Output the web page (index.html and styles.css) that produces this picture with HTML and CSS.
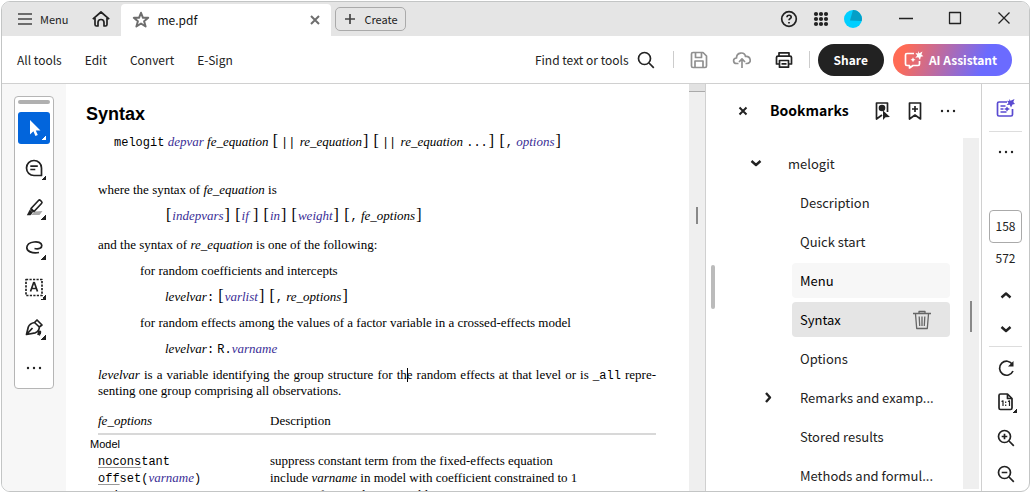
FILE: index.html
```html
<!DOCTYPE html>
<html lang="en">
<head>
<meta charset="utf-8">
<title>me.pdf</title>
<link rel="stylesheet" href="styles.css">
</head>
<body>
<div class="window">
  <header class="tabbar">
    <button class="menu-btn"><svg class="ico" width="16" height="16" viewBox="0 0 16 16"><path d="M1 3h14M1 8h14M1 13h14"/></svg>Menu</button>
    <button class="home-btn" aria-label="Home"><svg class="ico" width="20" height="18" viewBox="0 0 20 18"><path d="M1.800 9.200 10 2l8.200 7.200M4 8v6.500q0 1.500 1.500 1.500H7v-3.500a3 3 0 0 1 6 0V16h1.500q1.500 0 1.500-1.500V8"/></svg></button>
    <div class="tab">
      <svg class="ico star" width="18" height="18" viewBox="0 0 18 18"><path d="m9 1.800 2 5h5.200l-4.100 3.400 1.500 5.300L9 12.500l-4.600 3 1.500-5.300-4.100-3.400H7z"/></svg>
      <span class="tab-name">me.pdf</span>
      <button class="tab-close" aria-label="Close tab"><svg class="ico" width="10" height="10" viewBox="0 0 10 10"><path d="m1 1 8 8m0-8-8 8"/></svg></button>
    </div>
    <button class="create-btn"><svg class="ico" width="12" height="12" viewBox="0 0 12 12"><path d="M6 1v10M1 6h10"/></svg>Create</button>
    <div class="system">
      <button aria-label="Help"><svg class="ico" width="18" height="18" viewBox="0 0 18 18"><circle cx="9" cy="9" r="7.300"/><path d="M7 7.200c0-2.600 4.200-2.600 4.200 0C11.200 8.600 9 8.400 9 10.300M9 12v1.500"/></svg></button>
      <button aria-label="Apps"><svg class="solid" width="16" height="16" viewBox="0 0 16 16"><circle cx="3" cy="3" r="2.100"/><circle cx="8" cy="3" r="2.100"/><circle cx="13" cy="3" r="2.100"/><circle cx="3" cy="8" r="2.100"/><circle cx="8" cy="8" r="2.100"/><circle cx="13" cy="8" r="2.100"/><circle cx="3" cy="13" r="2.100"/><circle cx="8" cy="13" r="2.100"/><circle cx="13" cy="13" r="2.100"/></svg></button>
      <button aria-label="Account"><svg width="18" height="18" viewBox="0 0 18 18"><circle cx="9" cy="9" r="9" fill="#00cfff"/><path d="M9 0a9 9 0 0 1 8.700 11L6 10.500z" fill="#049fc7"/></svg></button>
    </div>
    <div class="win-controls">
      <button aria-label="Minimize"><svg class="ico thin" width="14" height="14" viewBox="0 0 14 14"><path d="M0 7.500h14"/></svg></button>
      <button aria-label="Maximize"><svg class="ico thin" width="14" height="14" viewBox="0 0 14 14"><path d="M1.500 1.500h11v11h-11z"/></svg></button>
      <button aria-label="Close"><svg class="ico thin" width="14" height="14" viewBox="0 0 14 14"><path d="m1.500 1.500 11 11m0-11-11 11"/></svg></button>
    </div>
  </header>

  <div class="toolbar">
    <nav class="tools">
      <button>All tools</button><button>Edit</button><button>Convert</button><button>E-Sign</button>
    </nav>
    <div class="actions">
      <button class="find">Find text or tools<svg class="ico" width="18" height="18" viewBox="0 0 18 18"><circle cx="7.500" cy="7.500" r="6"/><path d="m12 12 4.800 4.800"/></svg></button>
      <span class="sep"></span>
      <button class="save" aria-label="Save"><svg class="ico muted" width="18" height="18" viewBox="0 0 18 18"><path d="M3 1.500h10L16.500 5v10q0 1.500-1.500 1.500H3q-1.500 0-1.500-1.500V3Q1.500 1.500 3 1.500zM5.500 2v4.500h6V2M5 16v-6h8v6"/></svg></button>
      <button class="upload" aria-label="Upload"><svg class="ico muted" width="20" height="18" viewBox="0 0 20 18"><path d="M6.500 12.500H4.700C.5 12.300.7 7 4.500 7 4.500 1 12.500.300 13.500 5.500c5.500-.5 6.500 7 1.500 7h-1.500M10 17V8m-3 3 3-3.200L13 11"/></svg></button>
      <button class="print" aria-label="Print"><svg class="ico" width="18" height="18" viewBox="0 0 18 18"><path d="M4 5V1.800h10V5M4 13H1.500V6.500Q1.500 5.200 3 5.200h12q1.500 0 1.500 1.300V13H14M4.500 9.500h9v6.700h-9zM6.500 12.800h5"/></svg></button>
      <span class="sep"></span>
      <button class="share">Share</button>
      <button class="assistant"><svg class="ico" width="20" height="20" viewBox="0 0 20 20"><path d="M10 3.500H3q-1.500 0-1.500 1.500v9Q1.500 15.500 3 15.500h2.500V18l3.500-2.500h5q1.500 0 1.500-1.500v-3"/><path class="fill" d="m14 1 1.400 2.200 3.100-1.700-1.100 3 2 1.700-2.600.6L16 10l-1.700-2.700-3 .4 1.900-2.300-1.700-2.400 2.700.5zM9 7.300l.8 1.700 1.700.8-1.700.8L9 12.300l-.8-1.700-1.700-.8L8.200 9z"/></svg>AI Assistant</button>
    </div>
  </div>

  <div class="workspace">
    <aside class="left-rail">
      <div class="toolbox">
        <span class="grip"></span>
        <button class="tool active" aria-label="Select"><svg class="solid" width="24" height="24" viewBox="0 0 24 24"><path d="M8 4v14.500l3.400-3.200 2 4.700 2.400-1-2-4.500h4.700z"/></svg></button>
        <button class="tool" aria-label="Comment"><svg class="ico" width="24" height="24" viewBox="0 0 24 24"><path d="M19.500 19.500H12a7.500 7.500 0 1 1 7.500-7.500zM8.300 10.200h7.500M8.300 13.500h5"/></svg></button>
        <button class="tool" aria-label="Highlight"><svg class="ico" width="24" height="24" viewBox="0 0 24 24"><path class="shade" d="m13 15.500 7.500-.5-3 4H9z"/><path d="m9 12.500 7.500-8q1-1 2 0l1 1q1 1 0 2l-7.500 8zM8.500 13l3 3"/><path class="fill" d="m7.800 13.500 3 3-2.300 2.700H4.800z"/></svg></button>
        <button class="tool" aria-label="Draw"><svg class="ico" width="24" height="24" viewBox="0 0 24 24"><path d="M12.500 12.500c4.500 1 7.500-.5 7.300-3.200C19.500 6.300 15.500 5.500 12 6c-4 .500-7 2.500-7.200 5.500C4.600 15 10 18 17 16.500"/></svg></button>
        <button class="tool" aria-label="Select text"><svg class="ico" width="24" height="24" viewBox="0 0 24 24"><path stroke-dasharray="2.200 1.300" d="M4 3.500h16v16H4z"/><path d="m8.500 15.500 3.200-9h.6l3.200 9M9.700 12.500h4.600"/></svg></button>
        <button class="tool" aria-label="Sign"><svg class="ico" width="24" height="24" viewBox="0 0 24 24"><path d="m4.500 18.500 1.800-7.500c1-2.500 3.500-4 6.200-4.500l4.800 4.500c0 3-2 5-4 5.800zM5 18l5.500-6M12.500 6.500 15 4l5 5-2.700 2M16 19c.5-2.500 1.500-4 2.300-3.500.8.500-1 3.500-.2 3.500"/></svg></button>
        <button class="more" aria-label="More tools"><svg class="solid" width="16" height="4" viewBox="0 0 16 4"><circle cx="2" cy="2" r="1.200"/><circle cx="8" cy="2" r="1.200"/><circle cx="14" cy="2" r="1.200"/></svg></button>
      </div>
    </aside>

    <main class="document">
      <h1>Syntax</h1>
      <p class="cmd"><code>melogit</code> <a href="#">depvar</a> <i>fe<u>_</u>equation</i> <b>[</b><code class="pipes">||</code> <i>re<u>_</u>equation</i><b>]</b> <b>[</b><code class="pipes">||</code> <i>re<u>_</u>equation</i> <code>...</code><b>]</b> <b>[</b><code>,</code> <a href="#">options</a><b>]</b></p>
      <p class="where">where the syntax of <i>fe<u>_</u>equation</i> is</p>
      <p class="deep"><b>[</b><a href="#">indepvars</a><b>]</b> <b>[</b><a href="#">if</a> <b>]</b> <b>[</b><a href="#">in</a><b>]</b> <b>[</b><a href="#">weight</a><b>]</b> <b>[</b><code>,</code> <i>fe<u>_</u>options</i><b>]</b></p>
      <p class="after">and the syntax of <i>re<u>_</u>equation</i> is one of the following:</p>
      <p class="mid">for random coefficients and intercepts</p>
      <p class="deep"><i>levelvar</i><code>:</code> <b>[</b><a href="#">varlist</a><b>]</b> <b>[</b><code>,</code> <i>re<u>_</u>options</i><b>]</b></p>
      <p class="mid">for random effects among the values of a factor variable in a crossed-effects model</p>
      <p class="deep"><i>levelvar</i><code>:</code> <code>R.</code><a href="#">varname</a></p>
      <p class="para"><i>levelvar</i> is a variable identifying the group structure for th<span class="caret"></span>e random effects at that level or is <u>_</u><code>all</code> repre&shy;senting one group comprising all observations.</p>
      <table class="options">
        <thead><tr><th scope="col"><i>fe<u>_</u>options</i></th><th scope="col">Description</th></tr></thead>
        <tbody>
          <tr class="group"><td colspan="2">Model</td></tr>
          <tr><td><code><span class="abbr">nocons</span>tant</code></td><td>suppress constant term from the fixed-effects equation</td></tr>
          <tr><td><code><span class="abbr">off</span>set(<a href="#">varname</a>)</code></td><td>include <i>varname</i> in model with coefficient constrained to 1</td></tr>
          <tr><td><code>asis</code></td><td>retain perfect predictor variables</td></tr>
        </tbody>
      </table>
    </main>

    <div class="doc-scroll"><span class="scroll-head"></span><span class="scroll-thumb"></span></div>

    <section class="bookmarks">
      <span class="splitter"></span>
      <div class="bm-head">
        <button class="bm-close" aria-label="Close panel"><svg class="ico" width="10" height="10" viewBox="0 0 10 10"><path d="m1.500 1.500 7 7m0-7-7 7"/></svg></button>
        <h2>Bookmarks</h2>
        <button class="bm-find" aria-label="Find current bookmark"><svg class="ico" width="16" height="20" viewBox="0 0 16 20"><path d="m8 14-5.500 4V2h11v9"/><circle class="fill" cx="8" cy="7" r="3.300"/><path class="fill" d="M9 9.500v9.500l2.500-2.800 4.500-.2z"/></svg></button>
        <button class="bm-add" aria-label="Add bookmark"><svg class="ico" width="14" height="20" viewBox="0 0 14 20"><path d="M1.500 2h11v16L7 14l-5.500 4zM7 5v6M4 8h6"/></svg></button>
        <button class="bm-more" aria-label="Options"><svg class="solid" width="16" height="4" viewBox="0 0 16 4"><circle cx="2" cy="2" r="1.200"/><circle cx="8" cy="2" r="1.200"/><circle cx="14" cy="2" r="1.200"/></svg></button>
      </div>
      <div class="bm-body">
        <ul class="tree">
          <li class="root"><button class="toggle" aria-label="Collapse"><svg class="ico bold" width="12" height="12" viewBox="0 0 12 12"><path d="m1.500 3 4.500 4 4.500-4"/></svg></button><button class="item">melogit</button></li>
          <li><span class="toggle"></span><button class="item">Description</button></li>
          <li><span class="toggle"></span><button class="item">Quick start</button></li>
          <li><span class="toggle"></span><button class="item hover">Menu</button></li>
          <li><span class="toggle"></span><button class="item selected">Syntax<svg class="ico thin trash" width="18" height="20" viewBox="0 0 18 20"><path d="M0 3.500h18M6 3V1.500h6V3M2.500 4l1.200 14.500h10.600L15.500 4M6.200 6.500l.5 9.500M9 6.500V16m2.800-9.500-.5 9.500"/></svg></button></li>
          <li><span class="toggle"></span><button class="item">Options</button></li>
          <li><button class="toggle" aria-label="Expand"><svg class="ico bold" width="12" height="12" viewBox="0 0 12 12"><path d="m4 1 4 4.500L4 10"/></svg></button><button class="item">Remarks and examp...</button></li>
          <li><span class="toggle"></span><button class="item">Stored results</button></li>
          <li><span class="toggle"></span><button class="item">Methods and formul...</button></li>
        </ul>
        <div class="bm-scroll"><span></span></div>
      </div>
    </section>

    <aside class="right-rail">
      <button class="summary" aria-label="Generative summary"><svg class="ico violet" width="20" height="20" viewBox="0 0 20 20"><path d="M11 4H3Q1.500 4 1.500 5.500v11Q1.500 18 3 18h12q1.500 0 1.500-1.500V11M4.500 8h5M4.500 11h3M4.500 14h6"/><path class="fill" d="m13 1 1.600 1.700L18.500 1l-1.200 3 1.700 2-2.500.5L15 9.500l-1.300-2.700-3 .2 1.800-2-1.500-2.300 2.300.3zM11 8.500l1 1.500 2 1-2 1-1 1.500-1-1.500-2-1 2-1z"/></svg></button>
      <hr>
      <button class="rail-more" aria-label="More panels"><svg class="solid" width="16" height="4" viewBox="0 0 16 4"><circle cx="2" cy="2" r="1.200"/><circle cx="8" cy="2" r="1.200"/><circle cx="14" cy="2" r="1.200"/></svg></button>
      <input class="page" type="text" value="158" aria-label="Page number">
      <span class="total">572</span>
      <button class="up" aria-label="Previous page"><svg class="ico bold" width="12" height="12" viewBox="0 0 12 12"><path d="m1.500 8.500 4.500-4 4.500 4"/></svg></button>
      <button class="down" aria-label="Next page"><svg class="ico bold" width="12" height="12" viewBox="0 0 12 12"><path d="m1.500 4 4.500 4 4.500-4"/></svg></button>
      <hr>
      <button class="rotate" aria-label="Rotate"><svg class="ico" width="18" height="18" viewBox="0 0 18 18"><path d="M15.500 5.500A7 7 0 1 0 16 12"/><path class="fill" d="M16.500 2v5.500H11z"/></svg></button>
      <button class="fit" aria-label="Actual size"><svg class="ico" width="18" height="20" viewBox="0 0 18 20"><path d="M3.500 2h7L15 6.500V16q0 1.500-1.500 1.500h-10Q2 17.500 2 16V3.500Q2 2 3.500 2zM10.500 2v4.500H15"/><path class="fine" d="M4.500 9.500 6 8.800V14m5-4.500 1.500-.7V14M8.700 9.500V11m0 1.500V14"/></svg></button>
      <button class="zoom-in" aria-label="Zoom in"><svg class="ico" width="18" height="18" viewBox="0 0 18 18"><circle cx="7.500" cy="7.500" r="6"/><path d="m12 12 4.800 4.800M7.500 4.700v5.600M4.700 7.500h5.600"/></svg></button>
      <button class="zoom-out" aria-label="Zoom out"><svg class="ico" width="18" height="18" viewBox="0 0 18 18"><circle cx="7.500" cy="7.500" r="6"/><path d="m12 12 4.800 4.800M4.700 7.500h5.600"/></svg></button>
    </aside>
  </div>
</div>
</body>
</html>
```
FILE: styles.css
```css
* { box-sizing: border-box; }

body {
  margin: 0;
  padding: 1px;
  height: 100vh;
  background: #fff;
  color: #222;
  font: 12px/20px "Noto Sans CJK SC", "Open Sans", sans-serif;
}

button {
  display: flex;
  align-items: center;
  padding: 0;
  border: 0;
  background: none;
  color: inherit;
  font: inherit;
  white-space: nowrap;
}

svg { display: block; flex: none; }
.ico { fill: none; stroke: #222; stroke-width: 1.7; stroke-linejoin: round; }
.ico .fill { fill: #222; stroke: none; }
.ico .shade { fill: #aaa; stroke: none; }
.ico .fine { stroke-width: 1.2; }
.solid { fill: #222; }
.ico.thin { stroke-width: 1.3; }
.ico.bold { stroke-width: 2.4; }
.ico.muted { stroke: #909090; }
.ico.violet { stroke: #5a4bd1; }
.ico.violet .fill { fill: #5a4bd1; }

.window {
  display: flex;
  flex-direction: column;
  height: calc(100vh - 2px);
  border: 1px solid #c3c5c5;
  border-radius: 9px;
  overflow: hidden;
}

/* Tab bar */
.tabbar {
  display: flex;
  align-items: center;
  height: 34px;
  flex: none;
  background: #e5e5e5;
  font-size: 11px;
}
.menu-btn { gap: 7px; margin-left: 15px; }
.menu-btn .ico, .create-btn .ico { stroke: #444; }
.home-btn { margin-left: 23px; }
.tab {
  display: flex;
  align-items: center;
  align-self: flex-end;
  width: 210px;
  height: 32px;
  margin-left: 10px;
  padding: 0 11px;
  border-radius: 4px 4px 0 0;
  background: #fff;
  color: #111;
  font-size: 12px;
}
.ico.star { stroke: #6e6e6e; stroke-width: 2; }
.tab-name { flex: 1; margin-left: 7px; }
.tab-close .ico { stroke: #6e6e6e; stroke-width: 2; }
.create-btn {
  gap: 8px;
  height: 24px;
  margin-left: 4px;
  padding: 0 7px 0 8px;
  border: 1px solid #aaa;
  border-radius: 5px;
}
.system { display: flex; align-items: center; gap: 15px; margin-left: auto; }
.win-controls { display: flex; gap: 35px; margin: 0 18px 2px 37px; }

/* Main toolbar */
.toolbar {
  display: flex;
  align-items: center;
  justify-content: space-between;
  height: 48px;
  flex: none;
  padding: 0 17px 0 15px;
  border-bottom: 1px solid #d0d0d0;
}
.tools { display: flex; gap: 23px; }
.actions { display: flex; align-items: center; }
.find { gap: 8px; }
.sep { width: 1px; height: 17px; background: #ccc; }
.find + .sep { margin: 0 16px 0 18px; }
.upload { margin: 0 23px 0 24px; }
.print + .sep { margin: 0 8px 0 16px; }
.share, .assistant {
  height: 32px;
  border-radius: 16px;
  color: #fff;
  font-weight: 700;
}
.share { padding: 0 16px; background: #222; }
.assistant {
  gap: 5px;
  margin-left: 9px;
  padding: 0 15px 0 11px;
  background: linear-gradient(110deg, #ff6b55 10%, #6b6bff 75%);
}
.assistant .ico { stroke: #fff; }
.assistant .ico .fill { fill: #fff; }

.workspace { display: flex; flex: 1; min-height: 0; }

/* Tool box */
.left-rail { width: 64px; flex: none; padding: 12px 12px; background: #f7f7f7; }
.toolbox {
  display: flex;
  flex-direction: column;
  align-items: center;
  gap: 8px;
  width: 40px;
  padding: 3px 0 18px;
  border: 1px solid #b5b5b5;
  border-radius: 4px;
  background: #fff;
}
.grip { width: 32px; height: 4px; border-radius: 2px; background: #b0b0b0; }
.tool {
  position: relative;
  justify-content: center;
  width: 32px;
  height: 32px;
  border-radius: 3px;
}
.tool::after {
  content: "";
  position: absolute;
  right: 4px;
  bottom: 4px;
  width: 5px;
  height: 5px;
  background: linear-gradient(135deg, transparent 50%, #222 50%);
}
.tool.active { background: #0265dc; }
.active .solid { fill: #fff; }
.tool.active::after { background: linear-gradient(135deg, transparent 50%, #fff 50%); }
.more { margin-top: 14px; }

/* Page */
.document {
  flex: 1;
  min-width: 0;
  padding: 20px 33px 0 32px;
  overflow: hidden;
  color: #000;
  font: 13px/16px "Liberation Serif", serif;
}
.document h1 {
  margin: 0 0 10px -12px;
  font: 700 18px/20px "Liberation Sans", sans-serif;
}
.document p { margin: 0 0 10px; white-space: nowrap; }
.document a { color: #3a2e96; font-style: italic; font-family: "Liberation Serif", serif; font-size: 13px; text-decoration: none; }
.document code { font: 12px/0 "Liberation Mono", monospace; }
.document u { text-decoration: none; }
.document b { padding: 0 1px; font-weight: 400; font-size: 16px; line-height: 0; }
.document .cmd { margin: 0 0 32px 16px; }
.pipes { margin: 0 1px 0 2px; }
.document .mid { margin-left: 42px; }
.document .deep { margin-left: 67px; }
.document .where + .deep { margin-bottom: 13px; }
.document .para { margin-bottom: 14px; white-space: normal; text-align: justify; }
.caret { position: relative; }
.caret::after { content: ""; position: absolute; left: 0; top: 1px; width: 1px; height: 14px; background: #000; }
.options { width: 100%; border-collapse: collapse; }
.options th, .options td { padding: 0; font-weight: 400; text-align: left; white-space: nowrap; }
.options th { padding-bottom: 4px; border-bottom: 2px solid #d8d8d8; }
.options th:first-child { width: 172px; }
.options td { height: 17px; }
.options .group td { padding-top: 1px; font: 11px/16px "Liberation Sans", sans-serif; text-indent: -8px; }
.abbr { text-decoration: underline 1px #999; text-underline-offset: 2px; text-decoration-skip-ink: none; }

.doc-scroll {
  display: flex;
  flex-direction: column;
  align-items: center;
  width: 17px;
  flex: none;
  border-right: 1px solid #d0d0d0;
  background: #efefef;
}
.scroll-head { width: 100%; height: 8px; border-bottom: 1px solid #aaa; background: #e2e2e2; }
.scroll-thumb { width: 2px; height: 17px; margin-top: 115px; background: #888; }

/* Bookmarks */
.bookmarks {
  position: relative;
  display: flex;
  flex-direction: column;
  width: 276px;
  flex: none;
  border-right: 1px solid #d0d0d0;
  font-size: 13px;
}
.splitter { position: absolute; left: 5px; top: 181px; width: 4px; height: 44px; border-radius: 2px; background: #bbb; }
.bm-head { display: flex; align-items: center; height: 54px; padding: 0 25px 0 32px; flex: none; }
.bm-close .ico { stroke-width: 2; }
.bm-head h2 { flex: 1; margin: 0 0 2px 22px; color: #000; font-size: 14px; font-weight: 700; }
.bm-add { margin: 0 18px; }
.bm-body { display: flex; flex: 1; min-height: 0; }
.tree {
  display: flex;
  flex: 1;
  flex-direction: column;
  gap: 4px;
  min-width: 0;
  margin: 0;
  padding: 8px 13px 0 56px;
  overflow: hidden;
  list-style: none;
}
.tree li { display: flex; align-items: center; flex: none; }
.root { margin-left: -12px; }
.toggle { width: 12px; flex: none; }
.item { flex: 1; height: 35px; margin-left: 18px; padding: 0 8px; border-radius: 4px; }
.hover { background: #f7f7f7; color: #000; }
.selected { justify-content: space-between; padding-right: 19px; background: #e5e5e5; color: #000; }
.ico.trash { stroke: #666; }
.bm-scroll { width: 16px; margin: 0 2px 2px 0; padding-top: 163px; background: #efefef; }
.bm-scroll span { display: block; width: 2px; height: 31px; margin: 0 auto; background: #888; }

/* Page navigation */
.right-rail { display: flex; flex-direction: column; align-items: center; width: 47px; flex: none; padding-top: 14px; }
.right-rail hr { width: 33px; height: 1px; flex: none; margin: 0; border: 0; background: #ddd; }
.summary { margin-bottom: 13px; }
.rail-more { margin: 18px 0 56px; }
.page {
  width: 33px;
  height: 33px;
  flex: none;
  padding: 0 0 2px;
  border: 1px solid #aaa;
  border-radius: 4px;
  background: #fff;
  color: #222;
  font: inherit;
  text-align: center;
}
.total { margin-top: 5px; }
.up { margin-top: 21px; }
.down { margin: 22px 0 11px; }
.rotate { margin-top: 12px; }
.fit { position: relative; margin: 15px 0 17px; }
.fit::after {
  content: "";
  position: absolute;
  right: -2px;
  bottom: -1px;
  width: 5px;
  height: 5px;
  background: linear-gradient(135deg, transparent 50%, #222 50%);
}
.zoom-out { margin-top: 18px; }
```
